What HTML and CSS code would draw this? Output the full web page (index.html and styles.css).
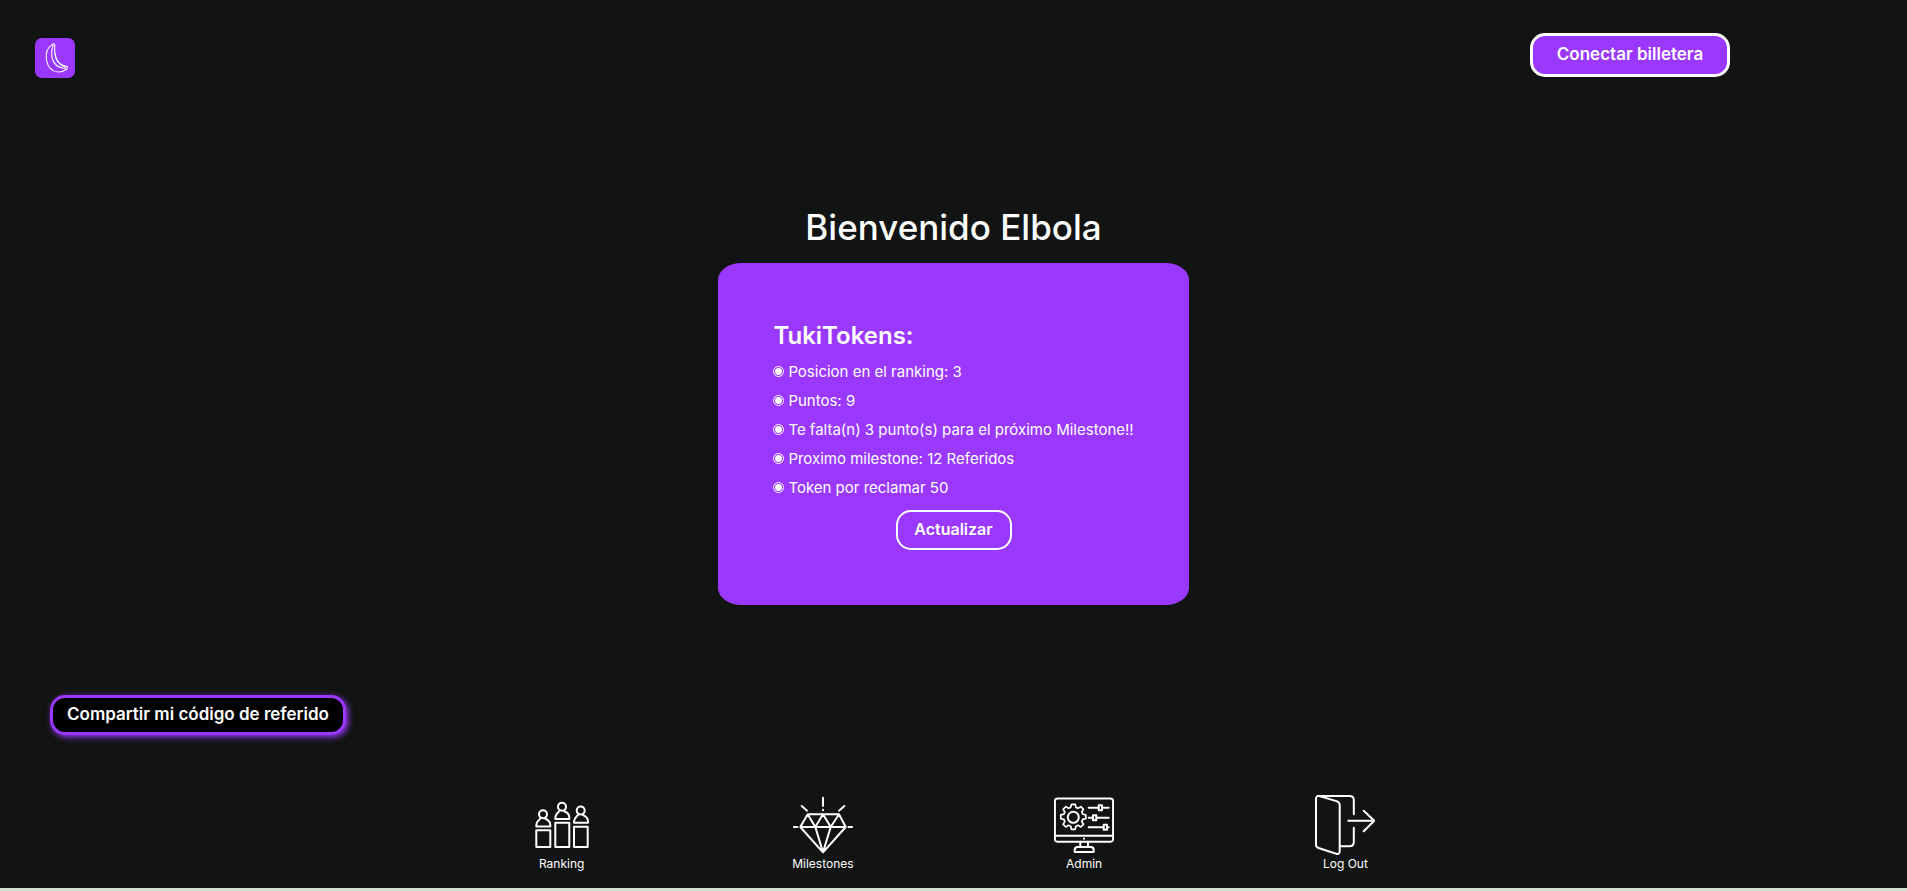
FILE: index.html
```html
<!DOCTYPE html>
<html lang="es">
<head>
<meta charset="utf-8">
<meta name="viewport" content="width=device-width, initial-scale=1">
<title>TukiTokens</title>
<link rel="stylesheet" href="styles.css">
</head>
<body>
<header class="topbar">
  <a class="logo" href="#" aria-label="Inicio">
    <svg viewBox="0 0 40 40" fill="none" stroke="#fff" stroke-width="1.1" stroke-linejoin="round" stroke-linecap="round">
      <path d="M17.3 6.4C12 10 10.5 16 11.5 22c1.2 7 5.500 11.500 11.500 12 3.500.2 6-.8 9-3l.3-2.400-2.300-.6c-4-1-6.500-3-8.500-6.500-1.600-3.500-2.100-8-1.700-14.500q-1-2-2.500-.6z"/>
      <path d="M18.200 7c-1.700 5-1.900 10-.6 14.500 1.600 5 5.400 7.800 10.900 8.700M20 15.500c.8 6 3.500 10.500 9 13.300M29.500 28l.8 3"/>
    </svg>
  </a>
  <button class="btn btn-wallet" type="button">Conectar billetera</button>
</header>

<main class="content">
  <h1 class="welcome">Bienvenido Elbola</h1>
  <section class="card">
    <h2 class="card-title">TukiTokens:</h2>
    <ul class="stats">
      <li>Posicion en el ranking: 3</li>
      <li>Puntos: 9</li>
      <li>Te falta(n) 3 punto(s) para el próximo Milestone!!</li>
      <li>Proximo milestone: 12 Referidos</li>
      <li>Token por reclamar 50</li>
    </ul>
    <button class="btn btn-update" type="button">Actualizar</button>
  </section>
</main>

<div class="share">
  <button class="btn btn-share" type="button">Compartir mi código de referido</button>
</div>

<nav class="menu">
  <a class="menu-item" href="#">
    <svg class="icon" viewBox="0 0 60 60">
      <path d="M4.300 35.300h14v16.700h-14zM23.300 27.700h14V52h-14zM42 31.700h13.700V52H42z"/>
      <g id="person"><circle cx="11" cy="19.300" r="4"/><path d="M8.600 22.300c1 2-4.300 3.200-4.300 7.700v1.500h14V30c0-3.500-2-5-5-6.200"/></g>
      <use href="#person" x="19" y="-7.500"/>
      <use href="#person" x="37.700" y="-3.700"/>
    </svg>
    <span>Ranking</span>
  </a>
  <a class="menu-item" href="#">
    <svg class="icon" viewBox="0 0 60 60">
      <path d="M14.700 19.300H46L52.700 32 30 57.300 7.300 32zM7.300 32h45.400M14.700 19.300L22.300 32 30 19.300 37.700 32 46 19.300M22.300 32L30 57.300 37.700 32"/>
      <path d="M30 2.700V11M30 14.800v.4M8.700 11l5.300 4.700M51.300 11L46 15.700M.9 32h3.600M55.500 32h3.600"/>
    </svg>
    <span>Milestones</span>
  </a>
  <a class="menu-item" href="#">
    <svg class="icon" viewBox="0 0 60 60">
      <rect x=".9" y="3.500" width="58.200" height="43.200" rx="2.500"/>
      <path d="M1 40.700h58M30 43.600v.2M26.300 46.700v5M34 46.700v5M20.700 57v-2q0-3 3-3h13q3 0 3 3v2z"/>
      <circle cx="19.300" cy="22.300" r="5.500"/>
      <path stroke-width="1.700" d="M17.400 9.300h3.800l.7 3.100 2.200.9 2.700-1.700 2.700 2.700-1.700 2.700.9 2.200 3.100.7v3.800l-3.100.7-.9 2.200 1.700 2.700-2.700 2.700-2.700-1.700-2.200.9-.7 3.100h-3.800l-.7-3.100-2.200-.9-2.700 1.700-2.700-2.700 1.700-2.700-.9-2.200-3.100-.7v-3.800l3.100-.7.9-2.200-1.700-2.700 2.700-2.700 2.700 1.700 2.200-.9z"/>
      <path d="M34.700 12.700h9.600M48.300 12.700h6.400M34.700 22.700h4M42.700 22.700h12M34.700 32.300h14.600M53.300 32.300h1.400"/>
      <path d="M44.700 10.200H48v5h-3.300zM39 20.200h3.300v5H39zM49.700 29.800H53v5h-3.300z"/>
    </svg>
    <span>Admin</span>
  </a>
  <a class="menu-item" href="#">
    <svg class="icon" viewBox="0 0 60 60">
      <path d="M3.500 1H34.500q4.300 0 4.300 4.300v14M38.800 32.700V47q0 4.300-4.300 4.300h-9.800"/>
      <path d="M1 4q0-4 4-2.800l16.500 4.900q3.200 1 3.200 4V56q0 3.800-3.500 2.700L3.500 53Q1 52 1 50z"/>
      <path d="M33.300 25.700h26M48.700 15.700l10.600 10-10.600 10.600"/>
    </svg>
    <span>Log Out</span>
  </a>
</nav>
<footer class="strip"></footer>
</body>
</html>
```
FILE: styles.css
```css
*,
*::before { box-sizing: border-box; }

body {
  margin: 0;
  min-height: 100vh;
  display: flex;
  flex-direction: column;
  background: #111412;
  color: #fff;
  font-family: Inter, "Liberation Sans", sans-serif;
}

.topbar {
  display: flex;
  justify-content: space-between;
  align-items: flex-start;
  padding: 33px 177px 0 35px;
}

.logo {
  width: 40px;
  height: 40px;
  margin-top: 5px;
  border-radius: 7px;
  background: #9b38ff;
}

.logo svg { display: block; }

.btn {
  border: 3px solid #fff;
  border-radius: 15px;
  padding: 0 12px 2px;
  height: 40px;
  background: #9b38ff;
  color: #fff;
  font-family: inherit;
  font-size: 17px;
  font-weight: 600;
  white-space: nowrap;
  cursor: pointer;
}

.btn-wallet {
  min-width: 200px;
  height: 44px;
}

.content {
  flex: 1;
  display: flex;
  flex-direction: column;
  align-items: center;
  padding-top: 124px;
}

.welcome {
  margin: 0 0 11px;
  font-size: 35px;
  line-height: 50px;
  font-weight: 500;
}

.card {
  display: flex;
  flex-direction: column;
  padding: 55px;
  min-width: 470px;
  border-radius: 5%;
  background: #9b38ff;
}

.card-title {
  margin: 0;
  font-size: 24px;
  line-height: 36px;
  font-weight: 600;
}

.stats {
  list-style: none;
  margin: 3px 0 8px;
  padding: 0;
  font-size: 15px;
  line-height: 29px;
}

.stats li {
  display: flex;
  align-items: center;
}

.stats li::before {
  content: "";
  width: 11px;
  height: 11px;
  margin-right: 4px;
  border: 1px solid #fff;
  border-radius: 50%;
  background: radial-gradient(circle, #fff 3px, #9b38ff 4px);
}

.btn-update {
  align-self: center;
  min-width: 116px;
  border-width: 2px;
  font-size: 16px;
}

.share { padding: 0 50px; }

.btn-share {
  min-width: 296px;
  border-color: #9b38ff;
  background: #000;
  box-shadow: 2px 2px 6px #9b38ff;
}

.menu {
  display: grid;
  grid-template-columns: repeat(4, 1fr);
  width: 54.8%;
  margin: 60px auto 0;
  padding-bottom: 15px;
}

.menu-item {
  display: flex;
  flex-direction: column;
  align-items: center;
  color: #fff;
  text-decoration: none;
  font-size: 12px;
  line-height: 18px;
}

.icon {
  width: 60px;
  height: 60px;
  fill: none;
  stroke: #fff;
  stroke-width: 2;
  stroke-linecap: round;
  stroke-linejoin: round;
}

.strip {
  height: 3px;
  background: #d5dfd2;
}
```
